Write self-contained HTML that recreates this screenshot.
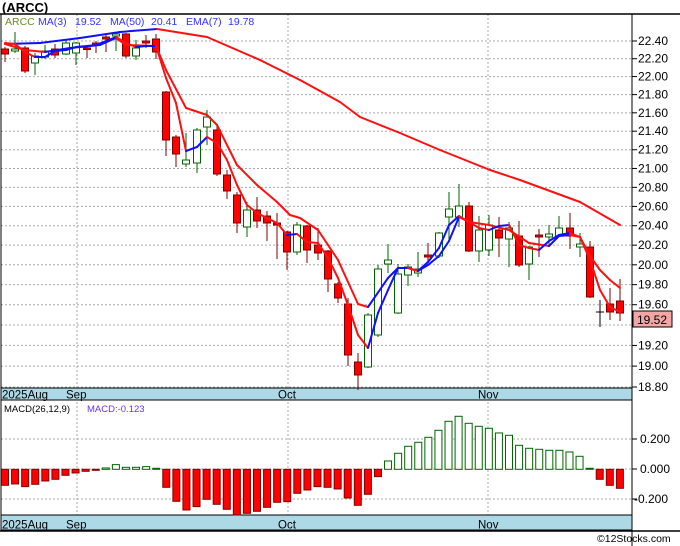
<!DOCTYPE html>
<html><head><meta charset="utf-8"><style>
body{margin:0;background:#fff;width:680px;height:546px;overflow:hidden;font-family:"Liberation Sans",sans-serif}
svg{position:absolute;left:0;top:0}
</style></head><body>
<svg id="s" width="680" height="546" xmlns="http://www.w3.org/2000/svg" font-family="Liberation Sans, sans-serif">
<text x="2" y="12" font-size="13" font-weight="bold" fill="#000">(ARCC)</text>
<text x="5" y="25" font-size="10.5" fill="#6b8e23">ARCC</text>
<text x="38" y="25" font-size="10.5" fill="#3333ff">MA(3)</text>
<text x="75" y="25" font-size="10.5" fill="#3333ff">19.52</text>
<text x="110" y="25" font-size="10.5" fill="#3333ff">MA(50)</text>
<text x="151" y="25" font-size="10.5" fill="#3333ff">20.41</text>
<text x="186" y="25" font-size="10.5" fill="#3333ff">EMA(7)</text>
<text x="228" y="25" font-size="10.5" fill="#3333ff">19.78</text>
<text x="4" y="412" font-size="9.5" fill="#000">MACD(26,12,9)</text>
<text x="87" y="412" font-size="9.5" fill="#6633ff">MACD:-0.123</text>
<text x="597" y="542" font-size="10.5" fill="#000">©12Stocks.com</text>
</svg>
<script>
const s=document.getElementById('s');const N='http://www.w3.org/2000/svg';
function el(t,a){const e=document.createElementNS(N,t);for(const k in a)e.setAttribute(k,a[k]);s.appendChild(e);return e}
function txt(x,y,t,sz){const e=el('text',{x:x,y:y,'font-size':sz||12,fill:'#000'});e.textContent=t}
const K=346/Math.log(22.4/18.8);
const py=p=>41+Math.log(22.4/p)*K;
for(let i=0;i<19;i++){const p=22.4-i*0.2,y=py(p);el('line',{x1:1,x2:632,y1:y,y2:y,stroke:'#aaa','stroke-dasharray':'2,2'});el('line',{x1:632,x2:637,y1:y,y2:y,stroke:'#000'});
 if(Math.abs(p-19.4)>0.01)txt(638,y+4,p.toFixed(2),12)}
[77,288,488].forEach(x=>{el('line',{x1:x,x2:x,y1:14,y2:515,stroke:'#aaa','stroke-dasharray':'2,2'})});
[439,469,499].forEach((y,i)=>{el('line',{x1:1,x2:632,y1:y,y2:y,stroke:'#aaa','stroke-dasharray':'2,2'});el('line',{x1:632,x2:637,y1:y,y2:y,stroke:'#000'});txt(i==2?634:640,y+4,['0.200','0.000','-0.200'][i],12)});
el('line',{x1:0,x2:680,y1:14,y2:14,stroke:'#000','stroke-width':1.5});
el('line',{x1:1,x2:1,y1:14,y2:531,stroke:'#000'});
el('line',{x1:632,x2:632,y1:14,y2:546,stroke:'#000'});
el('line',{x1:0,x2:680,y1:531,y2:531,stroke:'#000','stroke-width':1.5});
[[388,400],[515,530]].forEach(b=>{el('rect',{x:1,y:b[0],width:631,height:b[1]-b[0],fill:'#add8e6',stroke:'#000'});
 txt(2,b[1]-1.5,'2025Aug',11.5);txt(66,b[1]-1.5,'Sep',11.5);txt(278,b[1]-1.5,'Oct',11.5);txt(478,b[1]-1.5,'Nov',11.5)});
const C=[[5,49,54,47,62,'r'],[15,49,51,32,53,'g'],[25,48,71,46,73,'r'],[35,56,63,53,75,'g'],[45,51,57,45,59,'g'],[55,49,55,44,58,'r'],[66,43,54,41,55,'g'],[76,43,53,42,65,'g'],[87,48,49,45,58,'r'],[96,43,45,41,53,'r'],[106,37,39,35,52,'r'],[116,34,36,32,51,'g'],[126,34,56,33,58,'r'],[136,48,56,40,60,'g'],[146,41,43,35,48,'r'],[156,39,52,34,59,'r'],[166,92,140,91,156,'r'],[176,137,154,135,167,'r'],[186,160,164,133,167,'g'],[197,130,163,128,173,'g'],[207,117,127,110,145,'g'],[217,130,174,126,176,'r'],[227,175,191,170,199,'r'],[237,195,223,192,233,'r'],[247,210,227,202,237,'g'],[257,210,221,197,228,'r'],[267,216,223,211,241,'r'],[277,223,225,213,259,'r'],[287,232,252,231,270,'r'],[297,225,252,222,255,'g'],[307,226,250,225,263,'r'],[318,245,253,228,260,'r'],[328,251,279,250,292,'r'],[338,284,298,282,303,'r'],[348,304,355,298,366,'r'],[358,362,375,353,390,'r'],[368,315,367,313,368,'g'],[378,269,335,265,337,'g'],[388,260,264,244,273,'g'],[398,274,313,264,314,'g'],[408,267,275,264,286,'g'],[418,269,273,252,277,'g'],[428,255,257,243,263,'r'],[439,233,256,232,258,'g'],[449,209,217,192,242,'g'],[459,206,217,184,227,'g'],[469,206,251,202,252,'r'],[479,230,251,216,262,'g'],[489,225,250,215,256,'g'],[499,230,238,217,257,'r'],[509,228,239,222,267,'g'],[519,236,265,221,267,'r'],[529,247,264,246,280,'g'],[539,235,237,229,257,'r'],[549,234,237,225,245,'g'],[559,228,236,216,237,'g'],[570,228,236,213,249,'r'],[580,244,247,233,257,'g'],[590,247,297,241,298,'r'],[600,312,312,300,327,'k'],[610,304,312,288,320,'r'],[620,301,313,279,321,'r']];
C.forEach(c=>{const[x,t,b,wt,wb,k]=c;const col=k=='r'?'#800000':k=='g'?'#006400':'#000';
 el('line',{x1:x,x2:x,y1:wt,y2:wb,stroke:col});
 if(k=='k'){el('line',{x1:x-4,x2:x+4,y1:t,y2:t,stroke:'#000'});return}
 el('rect',{x:x-3.5,y:t,width:7,height:Math.max(b-t,1.5),fill:k=='r'?'#ff0000':'#fff',stroke:col})});
function line(pts){for(let i=1;i<pts.length;i++){const a=pts[i-1],b=pts[i];el('line',{x1:a[0],y1:a[1],x2:b[0],y2:b[1],stroke:b[1]<=a[1]?'#1010ff':'#ff1010','stroke-width':2,'stroke-linecap':'round'})}}
line([[5,44],[40,43],[80,38],[120,32],[157,29],[207,37],[260,60],[300,80],[340,102],[360,117],[400,133],[440,150],[490,170],[520,180],[580,202],[620,225]]);
line([[5,44],[25,50],[45,52],[70,48],[100,45],[116,38],[126,45],[156,46],[166,70],[186,108],[207,115],[217,125],[237,165],[257,185],[277,202],[290,215],[300,218],[318,230],[338,260],[358,304],[368,307],[388,278],[398,268],[408,268],[418,271],[428,265],[439,256],[449,241],[459,217],[469,222],[489,225],[509,230],[529,243],[549,246],[559,236],[570,235],[580,237],[590,256],[600,270],[610,280],[620,288]]);
line([[5,43],[15,44],[25,52],[35,57],[45,57],[55,51],[66,50],[76,47],[87,46],[96,45],[106,41],[116,37],[126,43],[136,47],[146,46],[156,46],[166,78],[176,103],[186,151],[197,147],[207,137],[217,143],[227,160],[237,185],[247,205],[257,213],[267,218],[277,223],[287,235],[297,234],[307,242],[318,243],[328,258],[338,278],[348,305],[358,335],[368,348],[378,313],[388,290],[398,268],[408,268],[418,271],[428,262],[439,248],[449,225],[459,216],[469,222],[479,228],[489,230],[499,226],[509,225],[519,245],[529,248],[539,250],[549,241],[559,235],[570,233],[580,237],[590,260],[600,290],[610,307],[620,312]]);
el('rect',{x:633,y:311,width:39,height:16,fill:'#f4a6a6',stroke:'#000'});txt(637,324,'19.52',12);
const M=[316,312,320,313,303,298,286,279,274,270,264,254,262,262,260,265,322,364,390,380,358,373,388,405,400,394,382,367,365,340,330,320,322,327,354,376,343,290,243,220,199,187,172,151,124,109,130,139,145,159,166,196,205,208,211,211,216,229,265,298,316,325];
M.forEach((v,i)=>{const x=5+i*10.08,h=(268-v)/3,z=469.3;const up=h>0;
 el('rect',{x:x-3.5,y:up?z-h:z,width:7,height:Math.max(Math.abs(h),1),fill:up?(i==15||i==58?'#006400':'#fff'):'#ff0000',stroke:up?'#006400':'#800000','stroke-width':1})});
</script>
</body></html>
